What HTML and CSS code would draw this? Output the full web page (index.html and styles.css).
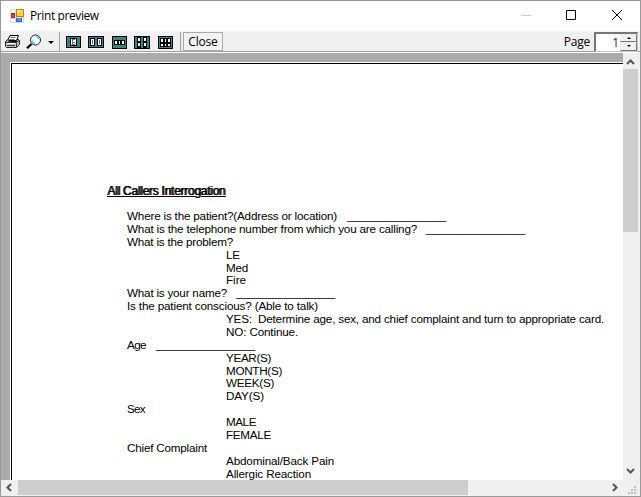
FILE: index.html
```html
<!DOCTYPE html>
<html lang="en">
<head>
<meta charset="utf-8">
<title>Print preview</title>
<link rel="stylesheet" href="styles.css">
</head>
<body>
<div class="window">
  <header class="titlebar">
    <svg class="app-icon" width="14" height="14" viewBox="0 0 14 14" shape-rendering="crispEdges">
      <path fill="#d8dde4" d="M0 0h6v14H0zM6 8h8v6H6z"/>
      <path fill="#fff" d="M1 1h4v3H1zM1 10h4v3H1zM12 9h1v4h-1z"/>
      <path fill="#b8860f" d="M6 0h8v8H6z"/><path fill="#ffce45" d="M7 1h6v6H7z"/><path fill="#ffe69a" d="M7 1h4v2H7z"/>
      <path fill="#9c2a20" d="M1 4h4v5H1z"/><path fill="#d8503c" d="M2 5h2v3H2z"/>
      <path fill="#2f62b5" d="M6 9h6v4H6z"/><path fill="#5a92e8" d="M7 9h4v3H7z"/>
    </svg>
    <span class="title">Print preview</span>
    <svg class="controls" width="120" height="14" viewBox="0 0 120 14" fill="none">
      <path stroke="#ccc" d="M5 7.5h10"/>
      <path stroke="#000" d="M50.5 2.5h9v9h-9z"/>
      <path stroke="#000" d="M96 2l10 10M106 2L96 12"/>
    </svg>
  </header>
  <div class="toolbar">
    <svg class="print" width="17" height="15" viewBox="0 0 17 15">
      <path fill="#fff" stroke="#000" d="M6 1.5h8.500l-2 5h-9z"/>
      <path stroke="#777" d="M6.500 3.500h5M5.500 5.500h5"/>
      <path fill="#c4c4c4" stroke="#222" d="M1.500 7.500l2-1.500h2l-1 1.500h7l1.500-2h1.500l1 1v4l-3 3h-10l-1-1z"/>
      <path stroke="#333" d="M2 8.500h10l3-2M12.500 9v4M3 11.500h8"/>
      <path stroke="#fff" d="M3 9.500h8"/>
    </svg>
    <svg class="magnify" width="17" height="16" viewBox="0 0 17 16">
      <path stroke="#000" stroke-width="2.200" d="M5.500 10L1 14.200"/>
      <circle cx="9.500" cy="6" r="5" fill="#fff" stroke="#222" stroke-width="1"/>
      <path fill="none" stroke="#20e8f5" stroke-width="1.300" d="M10 2.500q2.500 .5 3 3M6 6.500q.5 2.500 3 3"/>
    </svg>
    <i class="drop"></i><i class="sep"></i>
    <svg class="pages" width="111" height="14" viewBox="0 0 111 14" shape-rendering="crispEdges">
      <g fill="#3a8484" stroke="#000"><rect x=".5" y="1.500" width="14" height="11" rx="1"/><rect x="22.500" y="1.500" width="15" height="11" rx="1"/><rect x="46.500" y="1.500" width="14" height="12" rx="1"/><rect x="68.500" y="1.500" width="15" height="12" rx="1"/><rect x="92.500" y="1.500" width="14" height="12" rx="1"/></g>
      <g fill="#000"><path d="M4 3h7v8H4zM24 3h5v8h-5zM31 3h5v8h-5zM48 5h11v5H48zM71 2h4v11h-4zM77 2h4v11h-4zM94 3h11v9H94z"/></g>
      <g fill="#fff"><path d="M5 4h5v6H5zM25 4h3v6h-3zM32 4h3v6h-3zM49 6h2v3h-2zM53 6h1v3h-1zM56 6h2v3h-2zM72 3h2v3h-2zM78 3h2v3h-2zM72 8h2v3h-2zM78 8h2v3h-2zM95 4h2v3h-2zM99 4h1v3h-1zM102 4h2v3h-2zM95 9h2v2h-2zM99 9h1v2h-1zM102 9h2v2h-2z"/></g>
      <path fill="#6868b0" d="M6 4h3v1H7v2h2v1H7v1h2v1H6zM26 5h1v4h-1zM33 5h1v4h-1z"/>
    </svg>
    <i class="sep sep2"></i>
    <button class="close">Close</button>
    <span class="page-label">Page</span>
    <div class="spinner"><span class="num">1</span><div class="spin"><i class="up"></i><i class="down"></i></div></div>
  </div>
  <div class="preview">
    <div class="sheet">
      <h1><span data-w="118">All Callers Interrogation</span></h1>
      <p><span data-w="210">Where is the patient?(Address or location)</span><span class="blank" data-w="99">________________</span></p>
      <p><span data-w="290">What is the telephone number from which you are calling?</span><span class="blank short" data-w="99">________________</span></p>
      <p><span data-w="106">What is the problem?</span></p>
      <p class="sub"><span data-w="14">LE</span></p>
      <p class="sub"><span data-w="22">Med</span></p>
      <p class="sub"><span data-w="20">Fire</span></p>
      <p><span data-w="100">What is your name?</span><span class="blank short" data-w="99">________________</span></p>
      <p><span data-w="191">Is the patient conscious? (Able to talk)</span></p>
      <p class="sub"><span data-w="378">YES:&nbsp; Determine age, sex, and chief complaint and turn to appropriate card.</span></p>
      <p class="sub"><span data-w="72">NO: Continue.</span></p>
      <p><span data-w="19">Age</span><span class="blank" data-w="99">________________</span></p>
      <p class="sub"><span data-w="45">YEAR(S)</span></p>
      <p class="sub"><span data-w="56">MONTH(S)</span></p>
      <p class="sub"><span data-w="48">WEEK(S)</span></p>
      <p class="sub"><span data-w="38">DAY(S)</span></p>
      <p><span data-w="18">Sex</span></p>
      <p class="sub"><span data-w="30">MALE</span></p>
      <p class="sub"><span data-w="45">FEMALE</span></p>
      <p><span data-w="80">Chief Complaint</span></p>
      <p class="sub"><span data-w="108">Abdominal/Back Pain</span></p>
      <p class="sub"><span data-w="85">Allergic Reaction</span></p>
    </div>
  </div>
  <div class="vscroll">
    <svg width="15" height="16" viewBox="0 0 15 16"><path d="M4 11l3.500-3.500L11 11"/></svg>
    <div class="vthumb"></div>
    <svg width="15" height="16" viewBox="0 0 15 16"><path d="M4 6l3.500 3.500L11 6"/></svg>
  </div>
  <div class="hscroll">
    <svg width="17" height="15" viewBox="0 0 17 15"><path d="M10 4L6.500 7.500 10 11"/></svg>
    <div class="hthumb"></div>
    <svg width="17" height="15" viewBox="0 0 17 15"><path d="M7 4l3.500 3.500L7 11"/></svg>
  </div>
  <svg class="grip" width="15" height="16" viewBox="0 0 15 16"><path fill="#bfbfbf" d="M11 6h2v2h-2zM8 9h2v2H8zM11 9h2v2h-2zM5 12h2v2H5zM8 12h2v2H8zM11 12h2v2h-2z"/></svg>
</div>
<script src="fit.js"></script>
</body>
</html>
```
FILE: styles.css
```css
* { box-sizing: border-box; }
body { margin: 0; overflow: hidden; font-family: "Open Sans", sans-serif; font-size: 12px; color: #000; }
svg { display: block; flex: none; }
.window { width: 641px; height: 497px; border: 1px solid #999; background: #f0f0f0; display: grid; grid-template: 30px 22px 427px 16px / 622px 17px; }
.titlebar { grid-column: 1 / 3; background: #fff; display: flex; align-items: center; padding-left: 9px; }
.app-icon { margin-top: -1px; }
.title { margin: -2px 0 0 6px; white-space: nowrap; letter-spacing: -.4px; }
.controls { margin: -2px 4px 0 auto; }
.toolbar { grid-column: 1 / 3; display: flex; align-items: center; border-bottom: 1px solid #fff; box-shadow: inset 0 -1px #a0a0a0; padding-left: 3px; }
.print { width: 17px; }
.magnify { margin-left: 5px; }
.drop { margin: 1px 0 0 5px; border: 3px solid transparent; border-top-color: #000; border-bottom: 0; }
.sep { width: 1px; height: 19px; margin-left: 5px; background: #a0a0a0; }
.pages { margin-left: 6px; }
.sep2 { margin-left: 3px; }
.close { width: 40px; height: 19px; margin: 0 0 0 2px; padding: 0; border: 1px solid #aaa; background: #f2f2f2; font: 12px/16px "Open Sans", sans-serif; letter-spacing: -.2px; color: #000; }
.page-label { margin-left: auto; margin-right: 4px; letter-spacing: -.2px; }
.spinner { width: 44px; height: 20px; margin-right: 2px; border: 1px solid #c8c8c8; border-top: 2px solid #777; border-left: 2px solid #777; background: #fff; display: flex; }
.num { flex: 1; text-align: right; padding-right: 1px; line-height: 17px; color: #600060; }
.spin { width: 17px; display: grid; grid-template-rows: 1fr 1fr; }
.spin i { border: 1px solid #777; border-top-color: #eee; border-left-color: #eee; background: #f0f0f0; display: flex; align-items: center; justify-content: center; }
.spin i::before { content: ""; border: 2px solid transparent; }
.spin .up::before { border-top: 0; border-bottom-color: #000; }
.spin .down::before { border-bottom: 0; border-top-color: #000; }
.preview { background: #ababab; padding: 10px 0 0 10px; overflow: hidden; }
.sheet { height: 430px; background: #fff; border: solid #000; border-width: 1px 0 0 1px; padding: 120px 0 0 95px; outline: 1px solid #fff; font-family: "Liberation Sans", sans-serif; }
.sheet h1 { margin: 0 0 12px; height: 14px; font-size: 12px; font-weight: 400; line-height: 14px; text-decoration: underline; text-shadow: 1px 0 #000; }
.sheet p { margin: 0 0 0 20px; height: 12.890px; line-height: 12.890px; font-size: 11.700px; white-space: pre; display: flex; }
.sheet p.sub { margin-left: 119px; }
.sheet h1 span, .sheet p span { display: block; flex: none; white-space: pre; }
.blank { margin-left: 10px; font-size: 11.500px; }
.blank.short { margin-left: 9px; }
.vscroll { display: flex; flex-direction: column; padding-bottom: 1px; }
.vthumb { height: 163px; width: 15px; background: #cdcdcd; margin-bottom: auto; }
.vscroll path, .hscroll path { fill: none; stroke: #555; stroke-width: 2; }
.hscroll { display: flex; }
.hthumb { width: 450px; height: 15px; background: #cdcdcd; margin-right: auto; }
```
FILE: fit.js
```js
// Spread each run of text over its printed width.
document.querySelectorAll('[data-w]').forEach(function (el) {
  var target = Number(el.dataset.w);
  el.style.width = 'max-content';
  var natural = el.getBoundingClientRect().width;
  el.style.letterSpacing = (target - natural) / el.textContent.length + 'px';
  el.style.width = target + 'px';
});
```
